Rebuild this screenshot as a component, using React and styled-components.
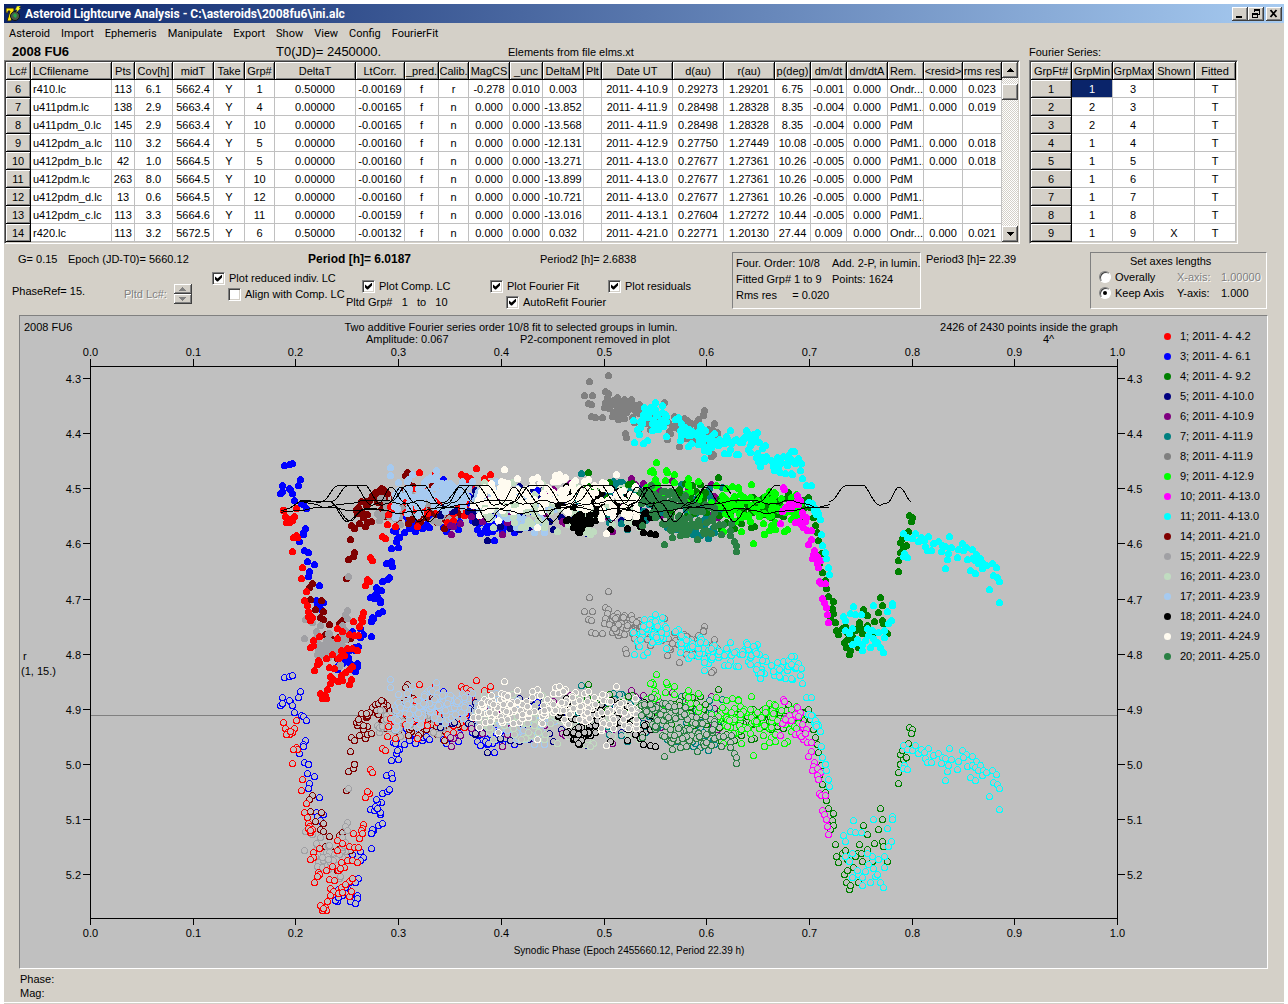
import React from "react";
import styled, { createGlobalStyle } from "styled-components";

const GlobalStyle = createGlobalStyle`
  * { box-sizing: border-box; }
  body {
    margin: 0;
    background: #fff;
    color: #000;
    font-family: "Liberation Sans", Arial, sans-serif;
    font-size: 11px;
    line-height: 14px;
  }
  button, input { font: inherit; color: inherit; margin: 0; padding: 0; }
`;

const FACE = "#d4d0c8";
const CANVAS = "#c0c0c0";

/* ---------- window frame ---------- */

const Window = styled.main`
  margin: 4px 4px 0;
  background: ${FACE};
`;

const TitleBar = styled.header`
  display: flex;
  align-items: center;
  gap: 4px;
  height: 19px;
  padding: 0 2px 0 1px;
  background: linear-gradient(to right, #0a246a, #a6caf0);
`;

const Title = styled.h1`
  flex: 1;
  margin: 0;
  color: #fff;
  font: bold 12px/18px Roboto, "Noto Sans", sans-serif;
  white-space: pre;
`;

const WindowButtons = styled.div`
  display: flex;
`;

const Raised = styled.button`
  display: flex;
  align-items: center;
  justify-content: center;
  flex: none;
  width: 16px;
  height: ${(p) => p.$h || 14}px;
  margin-left: ${(p) => (p.$apart ? 2 : 0)}px;
  background: ${FACE};
  border: 0;
  box-shadow: inset -1px -1px #404040, inset 1px 1px #fff, inset -2px -2px #808080;
`;

const Menu = styled.nav`
  display: flex;
  gap: 11px;
  height: 20px;
  padding: 2px 0 0 5px;
`;

const MenuItem = styled.button`
  background: none;
  border: 0;
  font: 11px/18px Roboto, "Noto Sans", sans-serif;
`;

/* ---------- tables ---------- */

const Tables = styled.section`
  display: flex;
  gap: 10px;
`;

const MainTableArea = styled.div`
  width: 1015px;
`;

const Caption = styled.div`
  display: flex;
  align-items: center;
  height: 17px;
  white-space: pre;
`;

const ObjectName = styled.strong`
  width: 264px;
  padding-left: 8px;
  font-size: 13px;
`;

const Epoch0 = styled.span`
  width: 240px;
  padding-left: 8px;
  font-size: 13px;
`;

const GridFrame = styled.div`
  display: flex;
  width: fit-content;
  border: 1px solid;
  border-color: #808080 #fff #fff #808080;
  box-shadow: inset 1px 1px #404040;
  padding: 1px;
  background: ${FACE};
`;

const DataTable = styled.table`
  table-layout: fixed;
  width: ${(p) => p.$w}px;
  border-collapse: separate;
  border-spacing: 0;
  background: #fff;
`;

const Head = styled.th`
  height: 18px;
  padding: 0 ${(p) => (p.$left ? 2 : 0)}px;
  overflow: hidden;
  font-weight: normal;
  line-height: 16px;
  text-align: ${(p) => (p.$left ? "left" : "center")};
  white-space: nowrap;
  background: ${FACE};
  border-right: 1px solid #000;
  border-bottom: 1px solid #000;
  box-shadow: inset 1px 1px #fff, inset -1px -1px #808080;
`;

const Cell = styled.td`
  height: 18px;
  padding: 0 ${(p) => (p.$left ? 2 : 0)}px;
  line-height: 16px;
  text-align: ${(p) => (p.$left ? "left" : "center")};
  white-space: pre;
  overflow: hidden;
  color: ${(p) => (p.$selected ? "#fff" : "#000")};
  background: ${(p) => (p.$selected ? "#0a246a" : "#fff")};
  border-right: 1px solid #c0c0c0;
  border-bottom: 1px solid #c0c0c0;
`;

const ScrollBar = styled.div`
  display: flex;
  flex-direction: column;
  width: 16px;
  background: repeating-conic-gradient(#fff 0 25%, ${FACE} 0 50%) 0 0 / 2px 2px;
`;

const Track = styled.div`
  flex: 1;
  padding-top: 6px;
`;

const columns = [
  ["Lc#", 25], ["LCfilename", 81, true], ["Pts", 23], ["Cov[h]", 38], ["midT", 41], ["Take", 31],
  ["Grp#", 30], ["DeltaT", 81], ["LtCorr.", 49], ["_pred.", 34], ["Calib.", 30], ["MagCS", 41],
  ["_unc", 33], ["DeltaM", 41], ["Plt", 18], ["Date UT", 71], ["d(au)", 51], ["r(au)", 51],
  ["p(deg)", 36], ["dm/dt", 36], ["dm/dtA", 41], ["Rem.", 36, true], ["<resid>", 39], ["rms res", 39],
];

const rows = `6|r410.lc|113|6.1|5662.4|Y|1|0.50000|-0.00169|f|r|-0.278|0.010|0.003||2011- 4-10.9|0.29273|1.29201|6.75|-0.001|0.000|Ondr...|0.000|0.023
7|u411pdm.lc|138|2.9|5663.4|Y|4|0.00000|-0.00165|f|n|0.000|0.000|-13.852||2011- 4-11.9|0.28498|1.28328|8.35|-0.004|0.000|PdM1..|0.000|0.019
8|u411pdm_0.lc|145|2.9|5663.4|Y|10|0.00000|-0.00165|f|n|0.000|0.000|-13.568||2011- 4-11.9|0.28498|1.28328|8.35|-0.004|0.000|PdM||
9|u412pdm_a.lc|110|3.2|5664.4|Y|5|0.00000|-0.00160|f|n|0.000|0.000|-12.131||2011- 4-12.9|0.27750|1.27449|10.08|-0.005|0.000|PdM1..|0.000|0.018
10|u412pdm_b.lc|42|1.0|5664.5|Y|5|0.00000|-0.00160|f|n|0.000|0.000|-13.271||2011- 4-13.0|0.27677|1.27361|10.26|-0.005|0.000|PdM1..|0.000|0.018
11|u412pdm.lc|263|8.0|5664.5|Y|10|0.00000|-0.00160|f|n|0.000|0.000|-13.899||2011- 4-13.0|0.27677|1.27361|10.26|-0.005|0.000|PdM||
12|u412pdm_d.lc|13|0.6|5664.5|Y|12|0.00000|-0.00160|f|n|0.000|0.000|-10.721||2011- 4-13.0|0.27677|1.27361|10.26|-0.005|0.000|PdM1..||
13|u412pdm_c.lc|113|3.3|5664.6|Y|11|0.00000|-0.00159|f|n|0.000|0.000|-13.016||2011- 4-13.1|0.27604|1.27272|10.44|-0.005|0.000|PdM1..||
14|r420.lc|113|3.2|5672.5|Y|6|0.50000|-0.00132|f|n|0.000|0.000|0.032||2011- 4-21.0|0.22771|1.20130|27.44|0.009|0.000|Ondr...|0.000|0.021`
  .split("\n")
  .map((line) => line.split("|"));

const fourierRows = [
  [1, 1, 3], [2, 2, 3], [3, 2, 4], [4, 1, 4], [5, 1, 5], [6, 1, 6], [7, 1, 7], [8, 1, 8], [9, 1, 9, "X"],
];

const Arrow = ({ up, fill = "#000" }) => (
  <svg width="7" height="4" viewBox="0 0 7 4" shapeRendering="crispEdges" aria-hidden="true">
    <path d={up ? "M3 0h1v1h1v1h1v1h1v1H0V3h1V2h1V1h1z" : "M0 0h7v1H6v1H5v1H4v1H3V3H2V2H1V1H0z"} fill={fill} />
  </svg>
);

/* ---------- parameters ---------- */

const Parameters = styled.section`
  display: flex;
  height: 71px;
  padding: 8px 17px 0 0;
  white-space: pre;
`;

const FitControls = styled.div`
  width: 728px;
`;

const Line = styled.div`
  display: flex;
`;

const Slot = styled.div`
  flex: none;
  width: ${(p) => p.$w}px;
  padding-top: ${(p) => p.$top || 0}px;
  font-weight: ${(p) => (p.$bold ? "bold" : "normal")};
  font-size: ${(p) => (p.$bold ? 12 : 11)}px;
`;

const Disabled = styled.span`
  color: #808080;
  text-shadow: 1px 1px #fff;
`;

const Spinner = styled.div`
  display: flex;
  flex-direction: column;
`;

const SpinButton = styled(Raised)`
  width: 18px;
  height: 10px;
`;

const Spin = styled.div`
  display: flex;
  align-items: center;
  gap: 7px;
`;

const Choice = styled.label`
  display: flex;
  align-items: center;
  gap: 4px;
  height: 16px;
  padding-left: ${(p) => p.$indent || 0}px;
`;

const Check = styled.input.attrs({ type: "checkbox" })`
  appearance: none;
  display: grid;
  flex: none;
  place-items: center;
  width: 13px;
  height: 13px;
  background: #fff;
  border: 1px solid;
  border-color: #808080 #fff #fff #808080;
  box-shadow: inset 1px 1px #404040, inset -1px -1px ${FACE};
  &:checked::before {
    content: "";
    width: 7px;
    height: 7px;
    background: #000;
    clip-path: polygon(0 29%, 0 71%, 29% 100%, 43% 100%, 100% 43%, 100% 0, 36% 57%);
  }
`;

const Radio = styled.input.attrs({ type: "radio" })`
  appearance: none;
  display: grid;
  flex: none;
  place-items: center;
  width: 12px;
  height: 12px;
  background: #fff;
  border: 1px solid;
  border-color: #808080 #fff #fff #808080;
  border-radius: 50%;
  box-shadow: inset 1px 1px #404040;
  &:checked::before {
    content: "";
    width: 4px;
    height: 4px;
    border-radius: 50%;
    background: #000;
  }
`;

const GroupBox = styled.div`
  flex: none;
  width: ${(p) => p.$w}px;
  height: 57px;
  padding: 2px 3px;
  border: 1px solid;
  border-color: #808080 #fff #fff #808080;
`;

const FitInfo = styled.div`
  display: grid;
  grid-template-columns: 96px 1fr;
  line-height: 16px;
`;

const Period3 = styled.div`
  flex: 1;
  padding-left: 5px;
`;

const AxesTitle = styled.div`
  height: 14px;
  padding-left: 36px;
  line-height: 12px;
`;

const AxesGrid = styled.div`
  display: grid;
  grid-template-columns: 78px 44px 1fr;
  align-items: center;
  padding-left: 5px;
`;

/* ---------- chart ---------- */

const ChartPanel = styled.section`
  display: flex;
  margin: 0 16px 0 15px;
  background: ${CANVAS};
  border: 1px solid;
  border-color: #808080 #fff #fff #808080;
`;

const Plot = styled.svg`
  flex: 1;
  min-width: 0;
  height: auto;
  display: block;
  text { font-family: "Liberation Sans", Arial, sans-serif; font-size: 11px; white-space: pre; }
`;

const AxisTitle = styled.text`
  && { font-size: 10px; }
`;

const Legend = styled.ul`
  flex: none;
  width: 117px;
  margin: 0;
  padding: 10px 0 0 14px;
  list-style: none;
`;

const LegendItem = styled.li`
  display: flex;
  align-items: center;
  gap: 9px;
  height: 20px;
  white-space: pre;
  &::before {
    content: "";
    width: 7px;
    height: 7px;
    border-radius: 50%;
    background: ${(p) => p.$color};
  }
`;

const Status = styled.footer`
  padding: 3px 0 0 16px;
  height: 34px;
  border-bottom: 1px solid #fff;
`;

const Base = styled.div`
  height: 2px;
  background: ${FACE};
`;

const colors = {
  1: "#ff0000", 3: "#0000ff", 4: "#008000", 5: "#000080", 6: "#800080", 7: "#008080", 8: "#808080",
  9: "#00ff00", 10: "#ff00ff", 11: "#00ffff", 14: "#800000", 15: "#a0a0a4", 16: "#c0dcc0",
  17: "#a6caf0", 18: "#000000", 19: "#fffbf0", 20: "#2a8044",
};

const legend = [
  [1, " 4- 4.2"], [3, " 4- 6.1"], [4, " 4- 9.2"], [5, " 4-10.0"], [6, " 4-10.9"], [7, " 4-11.9"],
  [8, " 4-11.9"], [9, " 4-12.9"], [10, " 4-13.0"], [11, " 4-13.0"], [14, " 4-21.0"], [15, " 4-22.9"],
  [16, " 4-23.0"], [17, " 4-23.9"], [18, " 4-24.0"], [19, " 4-24.9"], [20, " 4-25.0"],
];

let seed = 20110404;
const random = () => {
  seed = (seed * 1664525 + 1013904223) % 4294967296;
  return seed / 4294967296;
};

const list = (text) => text.trim().split(/\s+/).map((pair) => pair.split(",").map(Number));

const scatter = (n, path, spread) => {
  const nodes = list(path);
  const first = nodes[0][0];
  const last = nodes[nodes.length - 1][0];
  return Array.from({ length: n }, () => {
    const x = first + random() * (last - first);
    let i = 1;
    while (i < nodes.length - 1 && nodes[i][0] < x) i += 1;
    const [ax, ay] = nodes[i - 1];
    const [bx, by] = nodes[i];
    const y = ay + ((by - ay) * (x - ax)) / (bx - ax);
    return [Math.round(x), Math.round(y + (random() + random() - 1) * spread)];
  });
};

const series = [
  [3, [
    ...list(`284,465 289,464 292,463 300,479 298,485 282,485 280,493 282,491 290,489 289,488 292,493 294,500 301,503 303,504
    306,508 305,528 303,532 303,534 299,541 304,550 308,552 307,561 314,564 309,571 308,576 319,585 316,600 323,602 317,604
    322,610 320,608 332,654 330,653 327,654 333,654 337,669 335,668 338,657 344,653 348,657 345,661 342,663 350,663 357,663
    357,666 350,669 355,671 338,665 345,655 349,650 354,647 358,646 352,649 355,650 352,631 360,628 363,634 360,637 371,636
    371,620 373,618 372,617 371,621 378,613 382,611 380,602 380,600 370,597 374,598 381,590 377,590 376,587 375,594 377,596
    382,581 387,579 389,577 386,563 391,561 392,566 391,548 398,547 399,537 396,541 397,538 393,530 396,527 395,531 404,532
    412,527 409,524 408,520 409,528 422,528 423,525 426,524 443,479 459,488 494,540 487,532`),
    ...scatter(60, "405,513 540,508", 24), ...scatter(26, "480,526 515,524", 10),
  ]],
  [14, [
    ...list(`312,583 309,587 310,599 321,600 315,609 323,611 320,617 323,619 329,624 325,634 331,638 333,640 340,622 339,623
    342,620 345,615 342,648 337,658 346,578 350,539 348,559 353,556 354,552 351,525 354,528 357,513 356,510 359,523 359,510
    358,507 365,526 367,514 363,517 363,513 367,522 371,521 361,501 366,505 369,500 373,497 372,495 378,496 375,492 378,491
    381,497 383,489 387,493 388,505 390,511 393,515 407,472 405,475 408,483 413,486 402,491 432,485 433,487 446,486 419,515
    426,517 444,528 338,637 342,636 346,639 350,638 331,645`),
    ...scatter(60, "380,508 460,506", 20), ...scatter(14, "366,504 384,496", 9),
  ]],
  [15, [
    ...list(`347,610 345,614 347,618 348,576 342,625 345,630 345,639 304,638 305,619 312,622 320,625 316,631 339,666 340,664
    342,645 318,650 323,648 328,645 317,654 322,655 327,653 330,650 332,654 334,648 328,657 379,520 381,516 377,513 385,511
    438,522 433,520 448,519 454,517 391,514`),
    ...scatter(46, "378,506 455,505", 20), ...scatter(20, "315,645 344,642", 14),
  ]],
  [1, [
    ...list(`296,508 283,510 294,516 285,516 287,520 292,520 289,522 286,522 290,519 296,535 297,537 293,537 292,551 302,567
    301,578 306,591 304,600 307,605 308,611 309,614 308,616 310,620 312,617 310,618 319,636 313,640 313,645 310,647 318,660
    326,658 319,662 317,664 314,670 329,667 334,668 330,676 333,679 332,654 338,658 337,628 342,631 337,638 349,634 353,621
    359,626 363,612 362,616 361,618 362,621 354,635 358,635 347,648 341,650 344,655 340,656 352,648 357,650 349,669 352,666
    327,689 320,693 325,695 326,698 322,698 323,696 369,581 367,579 365,585 370,557 372,560 382,536 385,538 387,524 419,472
    435,473 476,468 490,474 488,483 488,487 447,522 453,520 341,675 345,672 338,681 342,680 349,684 330,683 351,679 461,474
    463,477 466,476 470,478 472,481 467,481 484,478`),
    ...scatter(36, "385,510 495,498", 24),
  ]],
  [5, [...scatter(80, "440,512 580,508 660,495", 28), ...list("487,540 510,528 519,529 553,529")]],
  [6, scatter(80, "440,508 725,504", 30)],
  [7, [...scatter(70, "575,498 735,512", 30), ...scatter(18, "672,528 720,530", 12)]],
  [17, [
    ...scatter(130, "392,497 480,494 505,508 560,508", 23), ...scatter(50, "395,494 465,492", 16),
    ...scatter(18, "508,524 545,526", 10), ...list("390,467 390,475 398,482 436,470 412,474"),
  ]],
  [16, [...scatter(100, "476,504 640,510", 28), ...list("590,534 542,483")]],
  [4, [
    ...scatter(56, "575,496 720,494", 26), ...scatter(60, "720,512 805,508", 20), ...scatter(24, "755,505 775,506", 9),
    ...list(`808,497 810,507 813,517 815,525 817,532 818,540 821,553 819,563 822,572 825,580 826,588 828,596 833,601 832,608
    833,613 830,617 835,622 836,630 838,634 842,628 845,626 847,632 844,642 846,647 849,654 850,650 859,622 863,609 867,615
    857,628 862,633 867,625 874,621 878,612 882,605 880,597 882,620 883,623 887,633 872,633 858,647 853,637 898,571 898,560
    900,552 903,547 900,542 902,538 906,545 908,531 909,515 912,517 911,521 855,630 861,628 847,639`),
  ]],
  [8, [
    ...list(`608,375 589,381 584,395 592,395 588,403 591,404 591,416 595,417 602,417 605,391 608,393 607,397 605,402 604,407
    609,406 617,397 624,399 613,403 629,403 625,433 626,437 698,420 704,410 714,423 664,402 667,439 679,446 713,454 711,456`),
    ...scatter(48, "608,408 640,410", 16), ...scatter(56, "635,412 718,434", 20),
  ]],
  [9, [
    ...scatter(80, "642,490 665,480 720,502 805,510", 24), ...scatter(40, "720,512 800,512", 24),
    ...list("656,462 751,484 753,543 650,471 764,534 769,530"),
  ]],
  [18, [...scatter(66, "555,505 655,512", 26), ...scatter(26, "572,523 592,522", 10), ...list("643,532 650,533 655,534")]],
  [19, [
    ...scatter(110, "472,506 510,496 640,496", 25), ...scatter(50, "480,496 600,492", 17),
    ...scatter(20, "600,512 638,500", 14), ...list("504,469 559,474 606,533 537,527"),
  ]],
  [20, [...scatter(80, "640,506 715,512", 24), ...scatter(34, "660,522 735,526", 18), ...list("730,535 734,541 736,545 736,551 664,544")]],
  [10, list(`783,487 784,489 797,495 800,500 792,505 787,508 782,511 780,523 795,522 799,521 803,515 802,512 806,517 803,527
    807,530 811,530 811,539 808,544 814,550 813,554 812,558 817,556 820,560 817,563 818,567 819,581 821,583 825,583 822,598
    824,602 826,607 827,614 828,622 789,503 795,502 785,507 791,508 798,504 801,524 805,521`)],
  [11, [
    ...list(`655,402 662,405 633,420 640,421 645,413 637,429 639,434 634,442 643,443 647,440 658,429 666,436 678,417 681,423
    675,419 688,446 704,458 708,451 802,478 806,485 811,485 809,502 812,503 815,512 817,513 820,519 821,534 822,545 825,552
    826,558 828,567 829,574 853,606 843,616 845,620 850,613 855,614 861,614 873,605 892,603 892,605 887,611 891,620 888,623
    884,630 884,637 878,632 872,630 867,628 868,635 873,638 875,643 870,647 865,640 862,650 858,642 852,644 857,639 862,644
    880,647 883,652 877,642 845,630 849,633 852,628 903,533 907,537 912,538 915,533 918,541 921,537 928,536 924,540 925,546
    927,550 931,550 933,543 938,541 942,545 941,551 945,546 949,536 951,547 948,553 947,559 945,568 962,543 966,547 958,549
    963,550 957,557 972,549 976,554 967,559 972,558 975,560 980,558 978,563 983,563 982,568 986,565 992,563 996,567 970,570
    975,573 993,575 997,577 999,581 989,589 999,602 904,553 903,556 907,557`),
    ...scatter(30, "640,416 668,416", 17), ...scatter(40, "680,430 720,442", 14),
    ...scatter(36, "722,440 765,444", 15), ...scatter(44, "755,456 803,464", 14), ...scatter(10, "808,499 820,519", 6),
  ]],
];

/* Vertical distance from a measured point to its residual. */
const residualShift = (group, x, y) => {
  if (group === 3 && x > 334 && x < 364 && y > 627) return y > 645 ? 232 : 223;
  if ((group === 4 || group === 11) && x > 834 && x < 896) return 211 + Math.min(24, Math.max(0, Math.round((y - 600) / 2)));
  if (group === 8) return 216;
  if (group === 11 && x > 960) return 207;
  if (group === 11 && x > 765 && x < 806) return 205;
  return 212;
};

const wave = [[0, 502], [18, 485], [33, 485], [50, 505], [58, 503], [70, 487], [84, 503], [98, 522], [112, 508], [123, 502]];

const waveHeight = (x, offset) => {
  const t = (((x - offset) % 123) + 123) % 123;
  let i = 1;
  while (wave[i][0] < t) i += 1;
  const [ax, ay] = wave[i - 1];
  const [bx, by] = wave[i];
  const k = (1 - Math.cos((Math.PI * (t - ax)) / (bx - ax))) / 2;
  return ay + (by - ay) * k;
};

const curve = (from, to, offset, scale = 1, middle = 502) => {
  const points = [];
  for (let x = from; x <= to; x += 2) points.push(`${x},${Math.round(middle + (waveHeight(x, offset) - 502) * scale)}`);
  return points.join(" ");
};

const curves = [
  curve(321, 731, 321), curve(331, 690, 331), curve(390, 780, 390),
  curve(829, 911, 829), curve(281, 829, 300, 0.16, 510), curve(300, 830, 350, 0.2, 503),
  "281,511 290,508 299,502 306,500 321,503", "300,502 330,501 335,506 340,514 344,520 347,522 351,520 356,515 365,508",
  "315,501 331,501 338,508 345,518 349,521 353,520 362,509 384,509",
];

const ticks = Array.from({ length: 11 }, (_, i) => i);
const tickX = (i) => Math.round(90 + i * 102.7) + 0.5;
const tickY = (i) => Math.round(378 + i * 55.15) + 0.5;

const Chart = () => (
  <Plot viewBox="20 316 1130 652" role="img" aria-label="Lightcurve of 2008 FU6 against synodic phase">
    <text x="24" y="331">2008 FU6</text>
    <text x="511" y="331" textAnchor="middle">Two additive Fourier series order 10/8 fit to selected groups in lumin.</text>
    <text x="1118" y="331" textAnchor="end">2426 of 2430 points inside the graph</text>
    <text x="366" y="343">Amplitude: 0.067</text>
    <text x="520" y="343">P2-component removed in plot</text>
    <text x="1043" y="343">4^</text>
    <g stroke="#000" fill="none" shapeRendering="crispEdges">
      <path d="M90.5 359V925M1117.5 359V925M90 366.5H1118M90 918.5H1118" />
      {ticks.map((i) => <path key={i} d={`M${tickX(i)} 359v7M${tickX(i)} 918v7`} />)}
      {ticks.slice(0, 10).map((i) => <path key={i} d={`M83 ${tickY(i)}h7M1118 ${tickY(i)}h7`} />)}
      <path d="M91 715.5H1117" stroke="#808080" />
    </g>
    {ticks.map((i) => (
      <g key={i} textAnchor="middle">
        <text x={tickX(i)} y="356">{(i / 10).toFixed(1)}</text>
        <text x={tickX(i)} y="937">{(i / 10).toFixed(1)}</text>
      </g>
    ))}
    {ticks.slice(0, 10).map((i) => (
      <g key={i}>
        <text x="81" y={tickY(i) + 4} textAnchor="end">{(4.3 + i / 10).toFixed(1)}</text>
        <text x="1127" y={tickY(i) + 4}>{(4.3 + i / 10).toFixed(1)}</text>
      </g>
    ))}
    <text x="23" y="660">r</text>
    <text x="21" y="675">(1, 15.)</text>
    <AxisTitle x="629" y="954" textAnchor="middle">Synodic Phase (Epoch 2455660.12, Period 22.39 h)</AxisTitle>
    <g shapeRendering="crispEdges">
      {series.map(([group, points]) => (
        <g key={group} fill={CANVAS} stroke={colors[group]}>
          {points.map(([x, y], i) => (
            <circle key={i} cx={x + 0.5} cy={y + residualShift(group, x, y) + 0.5} r="3" />
          ))}
        </g>
      ))}
      {series.map(([group, points]) => (
        <g key={group} fill={colors[group]}>
          {points.map(([x, y], i) => <circle key={i} cx={x + 0.5} cy={y + 0.5} r="3.5" />)}
        </g>
      ))}
      <g fill="none" stroke="#000">
        {curves.map((points, i) => <polyline key={i} points={points} />)}
      </g>
    </g>
  </Plot>
);

const AppIcon = () => (
  <svg width="16" height="16" viewBox="0 0 16 16" aria-hidden="true">
    <path d="M1 2h8v3L6 15H2L5 5H3v2H1z" fill="#ffe800" stroke="#222" />
    <circle cx="10" cy="10" r="4.5" fill="#48584c" stroke="#111" />
    <path d="M8 9l2-2 2 2-1 3-2-1z" fill="#28a848" />
    <path d="M12 0h4l-2 2h2l-5 5 1-3h-2z" fill="#ffff20" stroke="#333" strokeWidth=".5" />
  </svg>
);

export default function App() {
  return (
    <>
      <GlobalStyle />
      <Window>
        <TitleBar>
          <AppIcon />
          <Title>{"Asteroid Lightcurve Analysis - C:\\asteroids\\2008fu6\\ini.alc"}</Title>
          <WindowButtons>
            <Raised aria-label="Minimize">
              <svg width="10" height="9" shapeRendering="crispEdges"><path d="M1 7h6v2H1z" /></svg>
            </Raised>
            <Raised aria-label="Restore">
              <svg width="10" height="10" shapeRendering="crispEdges">
                <path d="M3 0h6v6H7V5h1V2H4v1H3zM1 4h6v5H1zM2 6v2h4V6z" fillRule="evenodd" />
              </svg>
            </Raised>
            <Raised $apart aria-label="Close">
              <svg width="10" height="9"><path d="M1.500 1l6 7M7.500 1l-6 7" stroke="#000" strokeWidth="1.800" /></svg>
            </Raised>
          </WindowButtons>
        </TitleBar>
        <Menu>
          {["Asteroid", "Import", "Ephemeris", "Manipulate", "Export", "Show", "View", "Config", "FourierFit"].map((m) => (
            <MenuItem key={m}>{m}</MenuItem>
          ))}
        </Menu>
        <Tables>
          <MainTableArea>
            <Caption>
              <ObjectName>2008 FU6</ObjectName>
              <Epoch0>T0(JD)= 2450000.</Epoch0>
              <span>Elements from file elms.xt</span>
            </Caption>
            <GridFrame>
              <DataTable $w={996}>
                <colgroup>{columns.map(([name, w]) => <col key={name} width={w} />)}</colgroup>
                <thead>
                  <tr>{columns.map(([name, , left]) => <Head key={name} scope="col" $left={left}>{name}</Head>)}</tr>
                </thead>
                <tbody>
                  {rows.map((row) => (
                    <tr key={row[0]}>
                      <Head scope="row">{row[0]}</Head>
                      {row.slice(1).map((value, i) => <Cell key={i} $left={columns[i + 1][2]}>{value}</Cell>)}
                    </tr>
                  ))}
                </tbody>
              </DataTable>
              <ScrollBar>
                <Raised $h={16} aria-label="Scroll up"><Arrow up /></Raised>
                <Track><Raised $h={16} aria-label="Scroll position" /></Track>
                <Raised $h={16} aria-label="Scroll down"><Arrow /></Raised>
              </ScrollBar>
            </GridFrame>
          </MainTableArea>
          <div>
            <Caption>Fourier Series:</Caption>
            <GridFrame>
              <DataTable $w={205}>
                <thead>
                  <tr>{["GrpFt#", "GrpMin", "GrpMax", "Shown", "Fitted"].map((h) => <Head key={h} scope="col">{h}</Head>)}</tr>
                </thead>
                <tbody>
                  {fourierRows.map(([n, min, max, shown]) => (
                    <tr key={n}>
                      <Head scope="row">{n}</Head>
                      <Cell $selected={n === 1}>{min}</Cell>
                      <Cell>{max}</Cell>
                      <Cell>{shown}</Cell>
                      <Cell>T</Cell>
                    </tr>
                  ))}
                </tbody>
              </DataTable>
            </GridFrame>
          </div>
        </Tables>

        <Parameters>
          <FitControls>
            <Line>
              <Slot $w={14} />
              <Slot $w={50}>G= 0.15</Slot>
              <Slot $w={240}>Epoch (JD-T0)= 5660.12</Slot>
              <Slot $w={232} $bold>Period [h]= 6.0187</Slot>
              <Slot $w={160}>Period2 [h]= 2.6838</Slot>
            </Line>
            <Line>
              <Slot $w={8} />
              <Slot $w={112} $top={18}>PhaseRef= 15.</Slot>
              <Slot $w={88} $top={18}>
                <Spin>
                  <Disabled>Pltd Lc#:</Disabled>
                  <Spinner>
                    <SpinButton disabled aria-label="Next lightcurve"><Arrow up fill="#808080" /></SpinButton>
                    <SpinButton disabled aria-label="Previous lightcurve"><Arrow fill="#808080" /></SpinButton>
                  </Spinner>
                </Spin>
              </Slot>
              <Slot $w={134} $top={4}>
                <Choice><Check defaultChecked />Plot reduced indiv. LC</Choice>
                <Choice $indent={16}><Check />Align with Comp. LC</Choice>
              </Slot>
              <Slot $w={144} $top={12}>
                <Choice $indent={16}><Check defaultChecked />Plot Comp. LC</Choice>
                <Choice as="div">Pltd Grp#   1   to   10</Choice>
              </Slot>
              <Slot $w={118} $top={12}>
                <Choice><Check defaultChecked />Plot Fourier Fit</Choice>
                <Choice $indent={16}><Check defaultChecked />AutoRefit Fourier</Choice>
              </Slot>
              <Slot $w={100} $top={12}>
                <Choice><Check defaultChecked />Plot residuals</Choice>
              </Slot>
            </Line>
          </FitControls>
          <GroupBox $w={189}>
            <FitInfo>
              <span>Four. Order: 10/8</span><span>Add. 2-P, in lumin.</span>
              <span>Fitted Grp# 1 to 9</span><span>Points: 1624</span>
              <span>Rms res     = 0.020</span>
            </FitInfo>
          </GroupBox>
          <Period3>Period3 [h]= 22.39</Period3>
          <GroupBox $w={177}>
            <AxesTitle>Set axes lengths</AxesTitle>
            <AxesGrid>
              <Choice><Radio name="axes" />Overally</Choice>
              <Disabled>X-axis:</Disabled>
              <Disabled>1.00000</Disabled>
              <Choice><Radio name="axes" defaultChecked />Keep Axis</Choice>
              <span>Y-axis:</span>
              <span>1.000</span>
            </AxesGrid>
          </GroupBox>
        </Parameters>

        <ChartPanel>
          <Chart />
          <Legend>
            {legend.map(([group, date]) => (
              <LegendItem key={group} $color={colors[group]}>{`${group}; 2011-${date}`}</LegendItem>
            ))}
          </Legend>
        </ChartPanel>
        <Status>
          <div>Phase:</div>
          <div>Mag:</div>
        </Status>
        <Base />
      </Window>
    </>
  );
}
